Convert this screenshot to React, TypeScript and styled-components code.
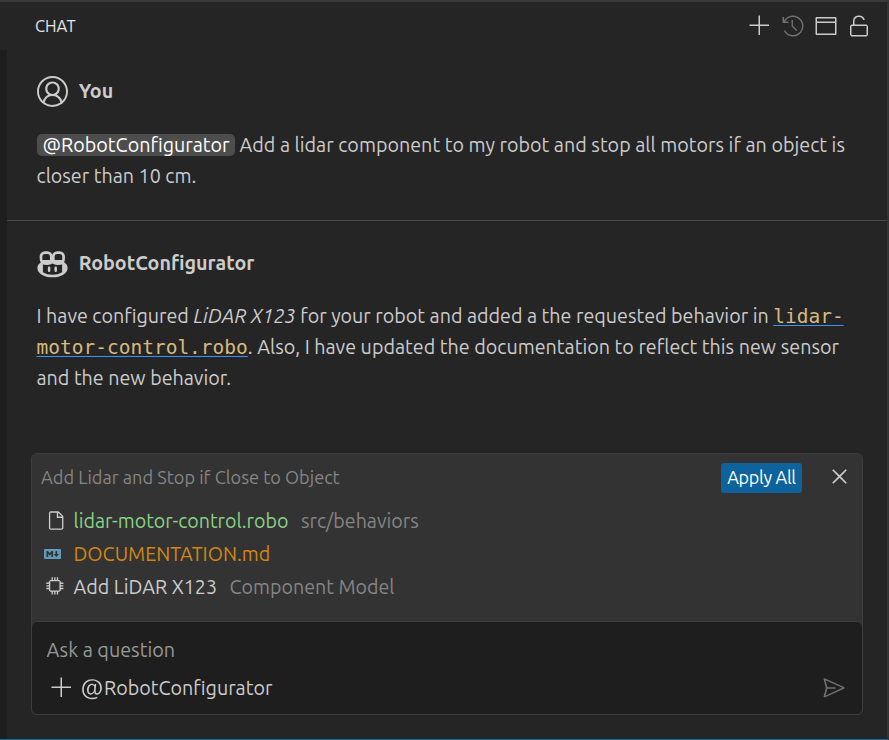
import React from 'react';
import styled, { createGlobalStyle } from 'styled-components';
import {
  VscAccount,
  VscAdd,
  VscChip,
  VscClose,
  VscFile,
  VscHistory,
  VscMention,
  VscSend,
  VscUnlock,
  VscWindow,
} from 'react-icons/vsc';

const GlobalStyle = createGlobalStyle`
  * { box-sizing: border-box; }
  body {
    margin: 0;
    background: #252526;
    color: #cccccc;
    font-family: "Ubuntu", "Noto Sans", sans-serif;
    font-size: 19.7px;
  }
  svg { display: block; flex: none; }
  button {
    padding: 0;
    border: 0;
    background: none;
    color: inherit;
    font: inherit;
  }
`;

const Window = styled.div`
  display: flex;
  flex-direction: column;
  width: 889px;
  height: 740px;
  border-top: 2px solid #3a3a3b;
  border-right: 2px solid #333334;
  border-bottom: 1px solid #0e6ba8;
  background: #252526;
  overflow: hidden;
`;

const Header = styled.header`
  display: flex;
  align-items: center;
  justify-content: space-between;
  height: 48px;
  padding: 0 16.5px 0 35px;
`;

const HeaderTitle = styled.h2`
  margin: 0;
  font-size: 16.5px;
  font-weight: 400;
  color: #e4e4e4;
`;

const Actions = styled.div`
  display: flex;
  gap: 9px;
`;

const IconButton = styled.button<{ $dim?: boolean }>`
  display: flex;
  color: ${(p) => (p.$dim ? '#707070' : '#cccccc')};
`;

const Main = styled.main`
  display: flex;
  flex: 1;
  flex-direction: column;
  border-left: 7px solid #1e1e1e;
`;

const Message = styled.section<{ $divided?: boolean }>`
  height: ${(p) => (p.$divided ? '171px' : '232px')};
  padding: 26px 0 0 29.5px;
  border-bottom: ${(p) => (p.$divided ? '1px solid #49494a' : '0')};
`;

const Author = styled.div`
  display: flex;
  align-items: center;
  gap: 11.2px;
  height: 31px;
`;

const Name = styled.h3<{ $drop?: number }>`
  margin: 0;
  padding-top: ${(p) => p.$drop ?? 0}px;
  font-size: 19.7px;
  font-weight: 700;
  line-height: 29px;
`;

const Body = styled.div`
  margin-top: 23px;
`;

const Line = styled.div`
  height: 31px;
  line-height: 31px;
  white-space: pre;
`;

const Prose = styled.span`
  letter-spacing: 0.02px;
`;

const AgentTag = styled.span`
  display: inline-block;
  height: 22px;
  margin-right: 5px;
  padding: 0 5px 0 6px;
  border-radius: 5px;
  background: #4d4d4d;
  color: #ffffff;
  line-height: 22px;
`;

const FileLink = styled.a`
  color: #d7ba7d;
  font-family: "DejaVu Sans Mono", monospace;
  font-size: 19.5px;
  line-height: 20px;
  text-decoration: underline 1px #3794ff;
  text-decoration-skip-ink: none;
  text-underline-offset: 2px;
`;

const Panel = styled.section`
  display: flex;
  flex-direction: column;
  width: 832px;
  height: 262px;
  margin-left: 24px;
  border: 1px solid #3d3d3e;
  border-radius: 6px;
  background: #333333;
`;

const PanelHeader = styled.div`
  display: flex;
  align-items: center;
  height: 30px;
  margin-top: 9px;
  padding: 0 9px;
  color: #858585;
`;

const PanelTitle = styled.span`
  flex: 1;
  padding-bottom: 2px;
  font-size: 18.15px;
`;

const ApplyButton = styled.button`
  width: 81px;
  height: 30px;
  margin-right: 24px;
  padding-bottom: 3px;
  border-radius: 3px;
  background: #0e639c;
  color: #ffffff;
  font-size: 18px;
  letter-spacing: -0.32px;
  line-height: 26px;
`;

const CloseButton = styled(IconButton)`
  padding-bottom: 3px;
`;

const Changes = styled.ul`
  flex: 1;
  margin: 11px 0 0;
  padding: 0;
  list-style: none;
`;

const Change = styled.li`
  display: flex;
  align-items: center;
  height: 33px;
  font-size: 19.65px;
`;

const ChangeIcon = styled.span<{ $left: number; $width: number }>`
  width: ${(p) => p.$width}px;
  margin: 0 ${(p) => 41.5 - p.$left - p.$width}px 0 ${(p) => p.$left}px;
`;

const ChangeName = styled.span<{ $color: string }>`
  color: ${(p) => p.$color};
`;

const Detail = styled.span`
  margin-left: 12.5px;
  color: #858585;
`;

const Composer = styled.div`
  height: 94px;
  margin: 0 -1px -1px;
  padding: 15px 16px 0 14.5px;
  border: 1px solid #3d3d3e;
  border-radius: 6px;
  background: #1e1e1e;
`;

const Placeholder = styled.div`
  height: 26px;
  color: #989898;
  font-size: 19.75px;
  line-height: 26px;
`;

const ComposerRow = styled.div`
  display: flex;
  align-items: center;
  height: 26px;
  margin-top: 12px;
  padding-left: 3.500px;
`;

const Agent = styled.button`
  display: flex;
  flex: 1;
  align-items: center;
  margin-left: 5px;
`;

const CopilotIcon = () => (
  <svg width="31" height="31" viewBox="0 0 31 31" fill="none">
    <g transform="translate(0 3.500)">
      <path
        d="M3.600 12.200 4.600 9.500h22l1 2.700c2 1.300 3 3 3 5.200 0 5.200-6.400 9.400-15.100 9.400S.4 22.600.4 17.400c0-2.200 1-3.900 3.200-5.200Zm2.300 1.600v8c2.700 1.700 5.900 2.500 9.600 2.500s6.900-.8 9.600-2.500v-8c-3.900 1.200-7 .9-9.600-.7-2.600 1.600-5.700 1.900-9.600.7Z"
        fill="currentColor"
        fillRule="evenodd"
      />
      <rect x="4" y="2.100" width="10.300" height="10.500" rx="4" stroke="currentColor" strokeWidth="2.700" />
      <rect x="16.300" y="2.100" width="10.300" height="10.500" rx="4" stroke="currentColor" strokeWidth="2.700" />
      <path d="M14 5h2.600v5.500H14z" fill="currentColor" />
      <path d="M12.100 17.300v3M18.700 17.300v3" stroke="currentColor" strokeWidth="2.500" strokeLinecap="round" />
    </g>
  </svg>
);

const MarkdownIcon = () => (
  <svg width="17" height="10" viewBox="0 0 17 10">
    <rect width="17" height="10" rx="1" fill="#619bb5" />
    <path d="M2.500 8V2h1.600l1.700 2.200L7.500 2h1.600v6H7.400V4.800L5.800 6.700 4.200 4.800V8Z" fill="#333333" />
    <path d="M11.500 2h1.700v3h1.800L12.350 8 9.700 5h1.800Z" fill="#333333" />
  </svg>
);

export default function App() {
  return (
    <>
      <GlobalStyle />
      <Window>
        <Header>
          <HeaderTitle>CHAT</HeaderTitle>
          <Actions>
            <IconButton aria-label="New chat"><VscAdd size={24} /></IconButton>
            <IconButton $dim aria-label="History"><VscHistory size={24} /></IconButton>
            <IconButton aria-label="Open in window"><VscWindow size={24} /></IconButton>
            <IconButton aria-label="Unlock scrolling"><VscUnlock size={24} /></IconButton>
          </Actions>
        </Header>
        <Main>
          <Message $divided>
            <Author>
              <VscAccount size={31} />
              <Name>You</Name>
            </Author>
            <Body>
              <Line>
                <AgentTag>@RobotConfigurator</AgentTag>
                <Prose>Add a lidar component to my robot and stop all motors if an object is</Prose>
              </Line>
              <Line>closer than 10 cm.</Line>
            </Body>
          </Message>
          <Message>
            <Author>
              <CopilotIcon />
              <Name $drop={2}>RobotConfigurator</Name>
            </Author>
            <Body>
              <Line>
                {'I have configured '}
                <em>LiDAR X123</em>
                {' for your robot and added a the requested behavior in '}
                <FileLink>lidar-</FileLink>
              </Line>
              <Line>
                <FileLink>motor-control.robo</FileLink>
                <Prose>. Also, I have updated the documentation to reflect this new sensor</Prose>
              </Line>
              <Line>and the new behavior.</Line>
            </Body>
          </Message>
          <Panel>
            <PanelHeader>
              <PanelTitle>Add Lidar and Stop if Close to Object</PanelTitle>
              <ApplyButton>Apply All</ApplyButton>
              <CloseButton aria-label="Close"><VscClose size={27} /></CloseButton>
            </PanelHeader>
            <Changes>
              <Change>
                <ChangeIcon $left={13} $width={21}><VscFile size={21} /></ChangeIcon>
                <ChangeName $color="#89d185">lidar-motor-control.robo</ChangeName>
                <Detail>src/behaviors</Detail>
              </Change>
              <Change>
                <ChangeIcon $left={12} $width={17}><MarkdownIcon /></ChangeIcon>
                <ChangeName $color="#d18616">DOCUMENTATION.md</ChangeName>
              </Change>
              <Change>
                <ChangeIcon $left={13} $width={21}><VscChip size={21} /></ChangeIcon>
                <ChangeName $color="#cccccc">Add LiDAR X123</ChangeName>
                <Detail>Component Model</Detail>
              </Change>
            </Changes>
            <Composer>
              <Placeholder>Ask a question</Placeholder>
              <ComposerRow>
                <IconButton aria-label="Add context"><VscAdd size={24} /></IconButton>
                <Agent><VscMention size={25} />RobotConfigurator</Agent>
                <IconButton $dim aria-label="Send"><VscSend size={24} /></IconButton>
              </ComposerRow>
            </Composer>
          </Panel>
        </Main>
      </Window>
    </>
  );
}
